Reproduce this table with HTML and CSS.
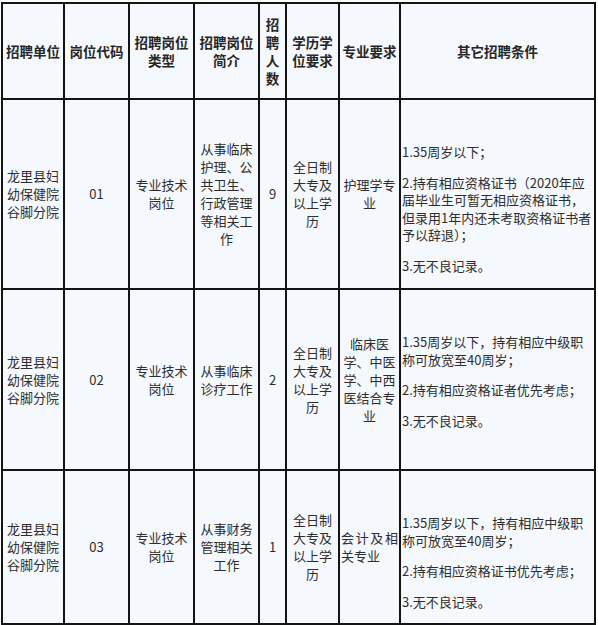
FILE: index.html
```html
<!DOCTYPE html>
<html lang="zh-CN">
<head>
<meta charset="utf-8">
<title>招聘岗位表</title>
<link rel="stylesheet" href="styles.css">
</head>
<body>
<div class="wrap">
<table class="jobs">
  <colgroup>
    <col class="c1"><col class="c2"><col class="c3"><col class="c4"><col class="c5"><col class="c6"><col class="c7"><col class="c8">
  </colgroup>
  <tr class="head">
    <th>招聘单位</th>
    <th>岗位代码</th>
    <th>招聘岗位类型</th>
    <th>招聘岗位简介</th>
    <th>招聘人数</th>
    <th>学历学位要求</th>
    <th>专业要求</th>
    <th>其它招聘条件</th>
  </tr>
  <tr class="r1">
    <td>龙里县妇幼保健院谷脚分院</td>
    <td>01</td>
    <td>专业技术岗位</td>
    <td>从事临床护理、公共卫生、行政管理等相关工作</td>
    <td>9</td>
    <td>全日制大专及以上学历</td>
    <td>护理学专业</td>
    <td class="cond">
      <p>1.35周岁以下；</p>
      <p>2.持有相应资格证书（2020年应届毕业生可暂无相应资格证书，但录用1年内还未考取资格证书者予以辞退）；</p>
      <p>3.无不良记录。</p>
    </td>
  </tr>
  <tr class="r2">
    <td>龙里县妇幼保健院谷脚分院</td>
    <td>02</td>
    <td>专业技术岗位</td>
    <td>从事临床诊疗工作</td>
    <td>2</td>
    <td>全日制大专及以上学历</td>
    <td>临床医学、中医学、中西医结合专业</td>
    <td class="cond">
      <p>1.35周岁以下，持有相应中级职称可放宽至40周岁；</p>
      <p>2.持有相应资格证者优先考虑；</p>
      <p>3.无不良记录。</p>
    </td>
  </tr>
  <tr class="r3">
    <td>龙里县妇幼保健院谷脚分院</td>
    <td>03</td>
    <td>专业技术岗位</td>
    <td>从事财务管理相关工作</td>
    <td>1</td>
    <td>全日制大专及以上学历</td>
    <td class="just">会计及相关专业</td>
    <td class="cond">
      <p>1.35周岁以下，持有相应中级职称可放宽至40周岁；</p>
      <p>2.持有相应资格证书优先考虑；</p>
      <p>3.无不良记录。</p>
    </td>
  </tr>
</table>
</div>
</body>
</html>
```

FILE: styles.css
```css
html, body {
  margin: 0;
  padding: 0;
  background: #ffffff;
}

body {
  font-family: "Noto Sans CJK SC", "Liberation Sans", sans-serif;
  color: #2e2e2e;
}

.wrap {
  padding: 2px 0 0 1px;
}

.jobs {
  table-layout: fixed;
  width: 595px;
  border-collapse: separate;
  border-spacing: 0;
  border-top: 2px solid #141414;
  border-left: 2px solid #141414;
  background: #f5f8fc;
}

.c1 { width: 62px; }
.c2 { width: 65px; }
.c3 { width: 65px; }
.c4 { width: 65px; }
.c5 { width: 27px; }
.c6 { width: 53px; }
.c7 { width: 61px; }
.c8 { width: 195px; }

.jobs th,
.jobs td {
  border-right: 2px solid #141414;
  border-bottom: 2px solid #141414;
  padding: 0 1px;
  text-align: center;
  vertical-align: middle;
  font-size: 13px;
  line-height: 18px;
  word-break: break-all;
}

.jobs th {
  font-size: 13.5px;
  font-weight: bold;
  color: #262626;
}

.head { height: 96px; }
.r1 { height: 190px; }
.r2 { height: 181px; }
.r3 { height: 152px; }

.jobs td.cond {
  text-align: left;
  vertical-align: top;
  padding: 43px 0 0 1px;
  line-height: 17.5px;
}

.cond p {
  margin: 0 0 13px;
}

.jobs td.just {
  text-align: justify;
  text-align-last: left;
}
```
